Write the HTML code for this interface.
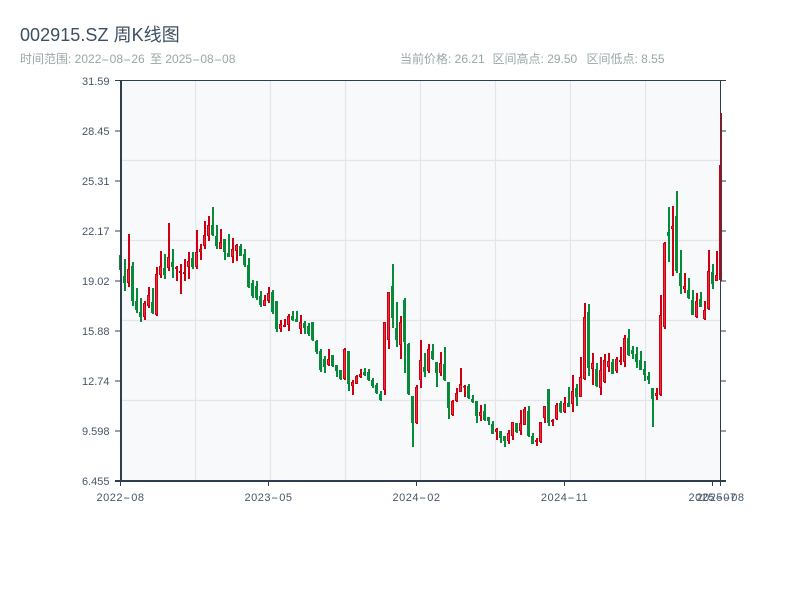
<!DOCTYPE html>
<html lang="zh">
<head>
<meta charset="utf-8">
<title>002915.SZ 周K线图</title>
<style>
html,body{margin:0;padding:0;background:#fff;width:800px;height:600px;overflow:hidden}
body{position:relative;font-family:"Liberation Sans","Noto Sans CJK SC",sans-serif}
.t{position:absolute;white-space:nowrap}
.title{left:20px;top:24px;font-size:18px;line-height:22px;letter-spacing:.05px;color:#3d4f60}
.sub{font-size:12px;line-height:14px;color:#9aa7a8;top:52px}
.h{display:inline-block;width:8.3px;text-align:center;transform:scaleX(2)}
.yl,.xl{font-size:11px;line-height:13px;color:#46566a}
.yl{right:690.5px}
.xl{top:492px;transform:translateX(-50%);letter-spacing:.5px}
svg{position:absolute;left:0;top:0}
</style>
</head>
<body>
<svg id="c" width="800" height="600" viewBox="0 0 800 600" xmlns="http://www.w3.org/2000/svg">
<rect x="120" y="81" width="600" height="400" fill="#f8f9fb"/>
<path d="M195.5 81V481M270.5 81V481M345.5 81V481M420.5 81V481M495.5 81V481M570.5 81V481M645.5 81V481M120 160.5H720M120 240.5H720M120 320.5H720M120 400.5H720" stroke="#e3e5e9" stroke-width="1.2" fill="none"/>
<g id="k"></g>
<g id="a" fill="none" stroke="#2c3e50">
<path d="M115 80.5H726" stroke-width="1"/>
<path d="M121 80V482" stroke-width="2"/>
<path d="M720.5 80V482" stroke-width="1"/>
<path d="M115 481H726" stroke-width="2"/>
<path d="M115 131H120M115 181H120M115 231H120M115 281H120M115 331H120M115 381H120M115 431H120M720 131H726M720 181H726M720 231H726M720 281H726M720 331H726M720 381H726M720 431H726" stroke-width="1"/>
<path d="M120.5 481V486M268.5 481V486M416.5 481V486M564.5 481V486M712.5 481V486M720.5 481V486" stroke-width="1"/>
</g>
</svg>
<div class="t title">002915.SZ 周K线图</div>
<div class="t sub" style="left:20px">时间范围: 2022<span class="h">-</span>08<span class="h">-</span>26 <span style="margin:0 0 0 2px">至</span> 2025<span class="h">-</span>08<span class="h">-</span>08</div>
<div class="t sub" style="left:400px">当前价格: 26.21</div>
<div class="t sub" style="left:492.5px">区间高点: 29.50</div>
<div class="t sub" style="left:586.5px">区间低点: 8.55</div>
<div class="t yl" style="top:76px">31.59</div>
<div class="t yl" style="top:126px">28.45</div>
<div class="t yl" style="top:176px">25.31</div>
<div class="t yl" style="top:226px">22.17</div>
<div class="t yl" style="top:276px">19.02</div>
<div class="t yl" style="top:326px">15.88</div>
<div class="t yl" style="top:376px">12.74</div>
<div class="t yl" style="top:426px">9.598</div>
<div class="t yl" style="top:476px">6.455</div>
<div class="t xl" style="left:120.5px">2022<span class="h">-</span>08</div>
<div class="t xl" style="left:268.5px">2023<span class="h">-</span>05</div>
<div class="t xl" style="left:416.5px">2024<span class="h">-</span>02</div>
<div class="t xl" style="left:564.5px">2024<span class="h">-</span>11</div>
<div class="t xl" style="left:712.5px">2025<span class="h">-</span>07</div>
<div class="t xl" style="left:720.5px">2025<span class="h">-</span>08</div>
<script>
var D=[
[0,255,273,255,270],[0,259,291,276,283],[1,234,287,269,283],[0,262,306,266,301],[0,288,313,301,310],[0,298,322,312,317],[1,301,320,303,317],[1,287,308,295,306],[0,288,314,302,313],[1,267,316,274,315],
[1,251,278,266,275],[0,254,279,268,275],[1,223,271,257,268],[0,249,278,262,267],[1,266,281,267,269],[1,264,294,271,273],[1,259,281,272,274],[1,252,279,261,267],[0,252,269,258,267],[1,230,269,252,267],
[1,244,260,249,252],[1,221,249,235,246],[1,216,241,225,236],[0,207,236,225,235],[0,225,249,236,246],[1,229,249,242,249],[0,239,260,239,252],[0,234,257,253,257],[1,238,263,249,257],[1,244,261,245,251],
[0,244,256,246,256],[0,249,267,254,265],[0,258,288,265,287],[0,280,298,283,296],[0,281,300,286,298],[0,291,307,296,305],[1,295,306,300,306],[1,287,303,293,301],[0,290,314,292,312],[0,301,332,301,329],
[1,320,332,324,329],[1,319,327,325,327],[1,314,331,316,325],[0,311,321,316,320],[0,311,322,319,322],[1,315,334,322,329],[0,321,334,323,328],[0,323,336,326,334],[0,322,341,322,340],[0,340,354,341,352],
[0,349,372,351,370],[0,356,373,359,367],[1,349,366,359,365],[0,355,367,355,366],[0,365,377,365,371],[0,370,380,370,379],[1,348,380,349,379],[0,351,391,351,384],[1,380,395,382,386],[1,375,384,376,384],
[1,369,378,374,377],[0,368,376,372,375],[0,369,381,372,380],[0,378,388,380,386],[0,383,394,385,393],[0,391,401,394,400],[1,322,395,322,390],[1,292,349,292,340],[0,264,328,286,318],[0,302,347,328,340],
[1,316,359,322,345],[0,298,373,300,342],[0,343,395,344,394],[0,396,447,396,423],[1,385,424,387,423],[1,340,388,360,380],[0,353,377,367,372],[1,344,373,349,371],[0,344,360,351,359],[0,362,387,362,373],
[1,352,376,363,373],[0,347,381,364,380],[0,382,419,382,408],[1,400,416,401,415],[1,388,402,393,401],[1,368,392,384,392],[1,385,397,386,387],[0,384,399,386,398],[0,395,403,399,402],[0,401,423,401,416],
[1,405,421,412,416],[0,404,421,411,420],[0,417,425,417,421],[0,421,434,424,434],[1,428,440,429,432],[0,431,443,431,438],[0,436,447,436,441],[1,430,444,433,441],[1,422,440,422,436],[0,423,433,423,432],
[1,410,435,423,431],[1,407,425,409,425],[0,406,437,411,436],[0,433,444,436,444],[1,438,446,440,442],[1,422,443,422,442],[1,406,423,406,418],[0,389,426,389,423],[1,419,426,420,422],[1,403,420,405,419],
[0,401,413,403,412],[1,397,413,403,412],[0,387,407,403,407],[1,375,412,391,404],[0,384,406,388,397],[1,357,397,377,397],[1,303,380,317,379],[0,304,376,312,368],[1,353,385,363,369],[0,363,387,369,386],
[1,357,395,370,388],[1,354,383,360,382],[1,353,372,361,367],[0,359,374,362,374],[1,357,373,359,371],[1,347,365,360,362],[1,335,367,338,362],[0,329,356,338,355],[0,346,359,350,354],[0,347,368,354,362],
[0,351,370,360,370],[0,361,381,369,375],[0,372,384,376,380],[0,388,427,388,399],[1,388,400,393,396],[1,295,396,315,395],[1,242,329,243,327],[0,207,262,232,236],[1,206,276,226,229],[0,191,273,216,271],
[0,250,294,273,286],[1,273,293,286,289],[0,278,299,290,298],[0,290,315,300,315],[1,293,318,301,317],[0,292,307,299,307],[1,301,320,310,319],[1,250,310,271,309],[0,264,289,272,284],[1,251,281,275,281],
[1,113,281,165,280]
];
var G="#078a3a",R="#cc0012",L="#e8303a",s="";
for(var i=0;i<D.length;i++){
 var d=D[i],x=120+4*i,c=d[0]?R:G;
 s+='<rect x="'+x+'" y="'+d[1]+'" width="2" height="'+(d[2]-d[1])+'" fill="'+c+'"/>';
 if(d[0]){
  s+='<rect x="'+(x-.5)+'" y="'+(d[3]+.5)+'" width="2" height="'+Math.max(d[4]-d[3]-1,.5)+'" fill="'+L+'" stroke="'+R+'" stroke-width="1"/>';
 }else{
  s+='<rect x="'+(x-1)+'" y="'+d[3]+'" width="3" height="'+(d[4]-d[3])+'" fill="'+G+'"/>';
 }
}
document.getElementById("k").innerHTML=s;
</script>
</body>
</html>
